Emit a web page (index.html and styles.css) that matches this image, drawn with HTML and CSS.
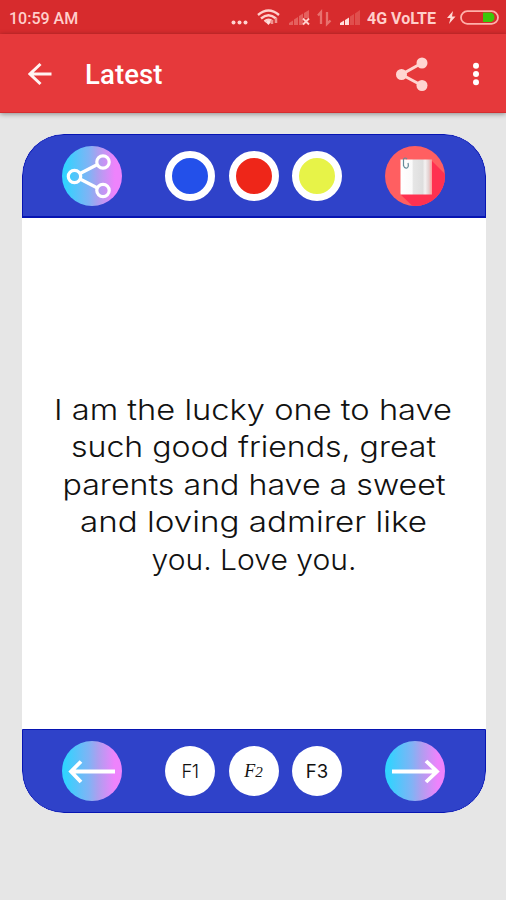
FILE: index.html
```html
<!DOCTYPE html>
<html lang="en">
<head>
<meta charset="utf-8">
<title>Latest</title>
<link rel="stylesheet" href="styles.css">
</head>
<body>
<div class="status">
  <span class="time">10:59 AM</span>
  <svg class="signals" width="138" height="34" viewBox="226 0 138 34">
    <g fill="#ffd4d0"><circle cx="233.500" cy="22.500" r="2"/><circle cx="239.500" cy="22.500" r="2"/><circle cx="245.500" cy="22.500" r="2"/></g>
    <g fill="none" stroke="#ffd0cc" stroke-width="2.400"><path d="M258 15Q268.500 6 279 15M261 18.500Q268.500 12 276 18.500M264.500 21.500Q268.500 18 272.500 21.500"/></g>
    <path d="M265.500 22Q268.500 19.500 271 22L268.500 25Z" fill="#ffe0dd"/>
    <path d="M272 24V20M276 23V18" stroke="#f09490" stroke-width="2.500"/>
    <g fill="#e5605e"><path d="M289 25V23L293 20.500V25ZM294 25V19.500L298 17V25ZM299 25V16L303 13.500V25ZM304 18V13L309 10V18Z"/></g>
    <path d="M303 18.500L309 24.500M309 18.500L303 24.500" stroke="#ffd0cc" stroke-width="1.900"/>
    <path d="M321 24V12L318 15.500M327 12V24L330.500 20.500" fill="none" stroke="#e8716e" stroke-width="2.300"/>
    <path d="M340 25V23L344 20.500V25ZM345 25V20L349 17.500V25Z" fill="#ffe0dd"/>
    <path d="M350 25V16.500L354 14V25ZM355 25V13.500L360 10V25Z" fill="#e04f4d"/>
  </svg>
  <span class="network">4G VoLTE</span>
  <svg class="battery" width="54" height="34" viewBox="446 0 54 34">
    <path d="M453 11L447 18H450.500L449 24L455.500 16.500H452Z" fill="#ffd9d5"/>
    <path d="M483 12.500H491A5 5 0 0 1 491 22H483Z" fill="#3cc80a"/>
    <rect x="461" y="11.200" width="37" height="12.600" rx="6.300" fill="none" stroke="#ffb0aa" stroke-width="1.800"/>
  </svg>
</div>
<header class="appbar">
  <svg class="back" width="24" height="24" viewBox="0 0 24 24"><path d="M23.500 12H2M12.500 2L2 12L12.500 22" fill="none" stroke="#fff4f2" stroke-width="3"/></svg>
  <h1>Latest</h1>
  <svg class="share" width="34" height="36" viewBox="0 0 34 36"><path d="M27 7L6.500 18.500L27 29.500" fill="none" stroke="#ffd5d1" stroke-width="3"/><g fill="#ffd5d1"><circle cx="27" cy="7" r="5.500"/><circle cx="6.500" cy="18.500" r="5.500"/><circle cx="27" cy="29.500" r="5.500"/></g></svg>
  <svg class="more" width="8" height="26" viewBox="0 0 8 26"><g fill="#fff"><circle cx="4" cy="4.700" r="3"/><circle cx="4" cy="13" r="3"/><circle cx="4" cy="21.300" r="3"/></g></svg>
</header>
<main class="card">
  <div class="bar top">
    <div class="round">
      <svg width="60" height="60" viewBox="0 0 60 60"><g fill="none" stroke="#fff"><path d="M18 27.500L35.500 18.500M18 33L35.500 42" stroke-width="3.300"/><g stroke-width="3.200"><circle cx="12.500" cy="30.500" r="6.200"/><circle cx="41" cy="16" r="6.200"/><circle cx="41" cy="44.500" r="6.200"/></g></g></svg>
    </div>
    <div class="group"><span class="dot blue"></span><span class="dot red"></span><span class="dot yellow"></span></div>
    <div class="round note">
      <svg width="60" height="60" viewBox="0 0 60 60">
        <defs><linearGradient id="page"><stop offset="0" stop-color="#fff"/><stop offset=".37" stop-color="#fafafa"/><stop offset=".4" stop-color="#e6e6e6"/><stop offset=".7" stop-color="#dedede"/><stop offset=".78" stop-color="#f4f2f2"/><stop offset=".9" stop-color="#e3d0d0"/><stop offset="1" stop-color="#ff9a98"/></linearGradient></defs>
        <path d="M46 14L70 38V70H38L15 48Z" fill="#ff3150"/>
        <rect x="15.500" y="13.500" width="31.500" height="35" fill="url(#page)"/>
        <path d="M18.500 20V13Q20 11 22 13M18.500 19Q19 22.500 22 22Q24 21 23 17" fill="none" stroke="#658b99" stroke-width="1.200"/>
      </svg>
    </div>
  </div>
  <svg class="message" width="464" height="511" viewBox="22 218 464 511">
    <text x="54" y="420" textLength="398" lengthAdjust="spacingAndGlyphs">I am the lucky one to have</text>
    <text x="71" y="457" textLength="365" lengthAdjust="spacingAndGlyphs">such good friends, great</text>
    <text x="62.500" y="494.500" textLength="383" lengthAdjust="spacingAndGlyphs">parents and have a sweet</text>
    <text x="80" y="532" textLength="347" lengthAdjust="spacingAndGlyphs">and loving admirer like</text>
    <text x="151.500" y="569.500" textLength="205" lengthAdjust="spacingAndGlyphs">you. Love you.</text>
  </svg>
  <div class="bar bottom">
    <div class="round"><svg width="60" height="60" viewBox="0 0 60 60"><path d="M53 30.500H9M19 20.500L9 30.500L19 41" fill="none" stroke="#fff" stroke-width="3.800"/></svg></div>
    <div class="group"><span class="font one">F1</span><span class="font script">F<small>2</small></span><span class="font">F3</span></div>
    <div class="round"><svg width="60" height="60" viewBox="0 0 60 60"><path d="M7 30.500H51M41 20L52 30.500L41 41" fill="none" stroke="#fff" stroke-width="3.800"/></svg></div>
  </div>
</main>
</body>
</html>
```
FILE: styles.css
```css
* { box-sizing: border-box; }
body {
  margin: 0;
  height: 900px;
  background: #e6e6e6;
  font-family: Roboto, "Liberation Sans", sans-serif;
  overflow: hidden;
}
svg { display: block; flex: none; }
.status {
  display: flex;
  align-items: center;
  height: 34px;
  padding-left: 9px;
  background: #d72b2d;
  color: #ffcfcb;
  font-weight: 500;
  white-space: nowrap;
}
.time { flex: none; width: 217px; font-size: 16px; padding-top: 2px; }
.network { flex: none; width: 79px; padding: 2px 0 0 3px; font-size: 16px; font-weight: 700; margin-right: 3px; }
.appbar {
  display: flex;
  align-items: center;
  height: 79px;
  padding: 0 26px 0 28px;
  background: #e6393b;
  border-bottom: 1px solid #d52d2f;
  box-shadow: 0 1px 5px rgba(0, 0, 0, .4);
  color: #fff;
}
.back { margin-top: 1px; }
.appbar h1 { margin: 3px auto 0 33px; font-size: 27.5px; font-weight: 500; letter-spacing: .1px; }
.share { margin: 2px 43px 0 0; }
.more { margin-top: 1px; }
.card {
  width: 464px;
  height: 679px;
  margin: 21px 0 0 22px;
  background: #fff;
  border-radius: 42px;
  overflow: hidden;
}
.bar {
  display: flex;
  align-items: center;
  justify-content: space-between;
  height: 84px;
  padding: 0 40px 0 39px;
  background: #2f42c9;
  border: 1px solid #0715b2;
}
.top { border-radius: 42px 42px 0 0; border-bottom-width: 2px; }
.bottom { border-radius: 0 0 42px 42px; }
.round {
  width: 60px;
  height: 60px;
  border-radius: 50%;
  overflow: hidden;
  background: linear-gradient(90deg, #31d3ff 5%, #81b3f5 45%, #ad9fef 60%, #ee83fc 88%);
}
.note { background: #ff5f61; }
.group { display: flex; gap: 13.5px; }
.dot { width: 50px; height: 50px; border: 7px solid #fff; border-radius: 50%; }
.blue { background: #2350ea; }
.red { background: #ee2619; }
.yellow { background: #e7f348; }
.message {
  font-family: Inter, "Open Sans", sans-serif;
  font-size: 28.5px;
  font-weight: 300;
  fill: #111;
}
.font {
  display: flex;
  align-items: center;
  justify-content: center;
  width: 50px;
  height: 50px;
  background: #fff;
  border-radius: 50%;
  color: #111;
  font: 400 18.5px Inter, sans-serif;
}
.one { font-weight: 300; letter-spacing: -.5px; }
.script { align-items: baseline; font: italic 18px/50px "Liberation Serif", serif; }
.script small { font-size: 15px; }
```
